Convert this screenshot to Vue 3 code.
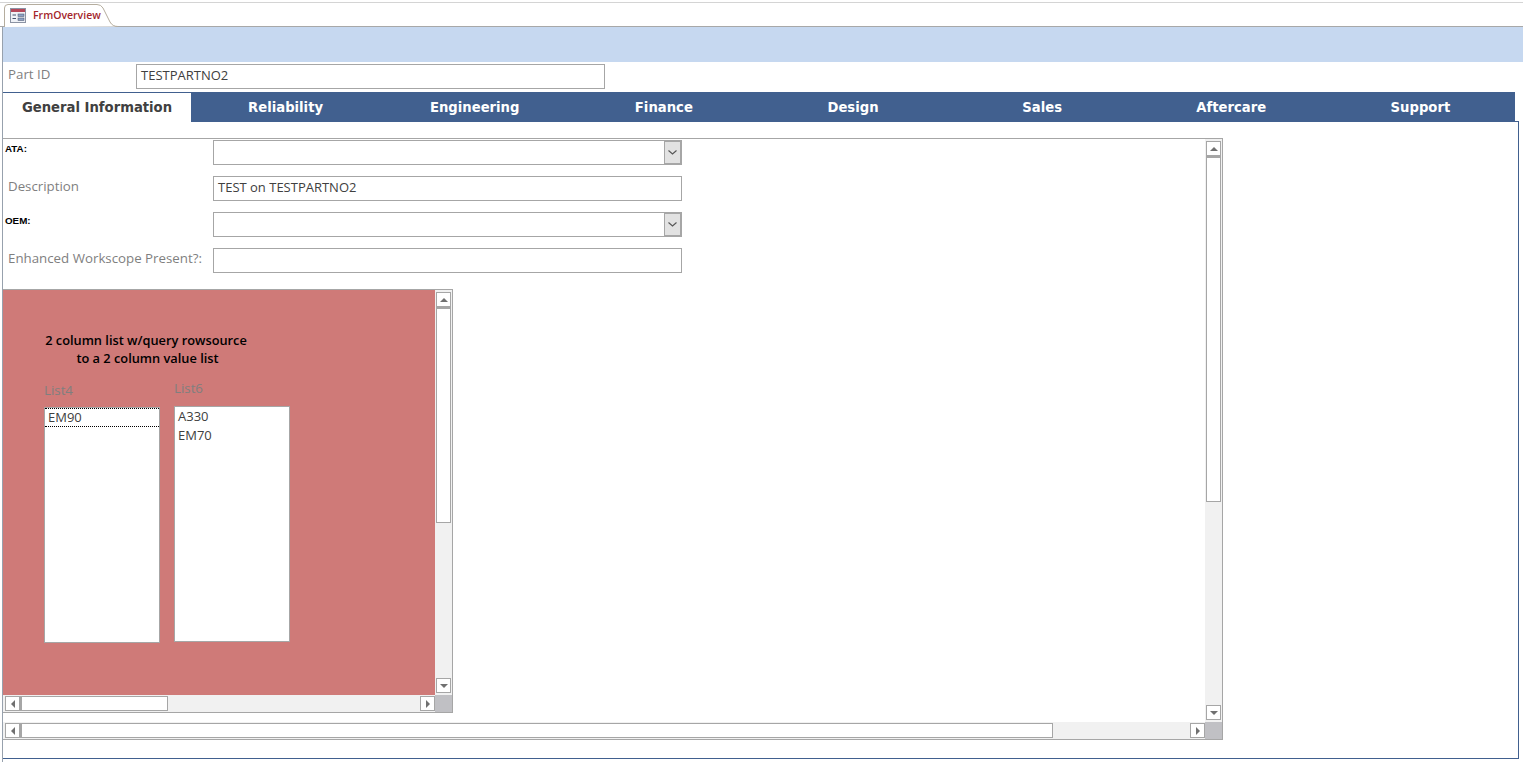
<script setup>
const tabs = ['Reliability', 'Engineering', 'Finance', 'Design', 'Sales', 'Aftercare', 'Support']
</script>

<template>
  <div class="page">
    <header class="doc-strip">
      <div class="doc-tab">
        <svg class="doc-tab-shape" width="116" height="24" viewBox="0 0 116 24">
          <path d="M1.500 24V5Q1.500 1.500 5 1.500H94Q98 1.500 100 5L107 19Q109.500 23.500 115 23.500" fill="#fff" stroke="#b5ad9e" />
        </svg>
        <svg class="form-icon" width="16" height="15" viewBox="0 0 16 15">
          <rect x="0.500" y="0.500" width="15" height="14" fill="#eef1f6" stroke="#8b93a3" />
          <rect x="1" y="1" width="14" height="3" fill="#b5485a" />
          <path d="M2.500 7H6M2.500 10.500H6" stroke="#44506a" />
          <rect x="8" y="6" width="6" height="2.500" fill="#8ea2c4" stroke="#44506a" stroke-width="0.500" />
          <rect x="8" y="10" width="6" height="2.500" fill="#8ea2c4" stroke="#44506a" stroke-width="0.500" />
        </svg>
        <span class="doc-title">FrmOverview</span>
      </div>
    </header>

    <main class="form">
      <div class="band"></div>

      <div class="part-row">
        <label class="field-label part-label">Part ID</label>
        <div class="box part-box">TESTPARTNO2</div>
      </div>

      <nav class="tabs">
        <div class="tab active">General Information</div>
        <div v-for="tab in tabs" :key="tab" class="tab">{{ tab }}</div>
      </nav>

      <section class="tab-page">
        <div class="scroller outer">
          <div class="pane outer-pane">
            <div class="row">
              <span class="mini-label">ATA:</span>
              <div class="box combo">
                <span class="combo-btn">
                  <svg width="9" height="5" viewBox="0 0 9 5"><path d="M0.500 0.500L4.500 4L8.500 0.500" fill="none" stroke="#555" stroke-width="1.100" /></svg>
                </span>
              </div>
            </div>
            <div class="row">
              <label class="field-label">Description</label>
              <div class="box">TEST on TESTPARTNO2</div>
            </div>
            <div class="row">
              <span class="mini-label">OEM:</span>
              <div class="box combo">
                <span class="combo-btn">
                  <svg width="9" height="5" viewBox="0 0 9 5"><path d="M0.500 0.500L4.500 4L8.500 0.500" fill="none" stroke="#555" stroke-width="1.100" /></svg>
                </span>
              </div>
            </div>
            <div class="row">
              <label class="field-label">Enhanced Workscope Present?:</label>
              <div class="box"></div>
            </div>

            <div class="scroller inner">
              <div class="pane pink">
                <h2 class="pink-title">2 column list w/query rowsource<span class="title-second">to a 2 column value list</span></h2>
                <div class="lists">
                  <div class="list-col first">
                    <span class="list-label">List4</span>
                    <div class="listbox">
                      <div class="list-item focused">EM90</div>
                    </div>
                  </div>
                  <div class="list-col">
                    <span class="list-label">List6</span>
                    <div class="listbox">
                      <div class="list-item">A330</div>
                      <div class="list-item">EM70</div>
                    </div>
                  </div>
                </div>
              </div>
              <div class="vbar">
                <span class="sb-btn"><i class="arrow up"></i></span>
                <span class="v-thumb inner-v"></span>
                <span class="v-fill"></span>
                <span class="sb-btn"><i class="arrow down"></i></span>
              </div>
              <div class="hbar">
                <span class="sb-btn"><i class="arrow left"></i></span>
                <span class="h-thumb inner-h"></span>
                <span class="h-fill"></span>
                <span class="sb-btn"><i class="arrow right"></i></span>
              </div>
              <div class="corner"></div>
            </div>
          </div>
          <div class="vbar">
            <span class="sb-btn"><i class="arrow up"></i></span>
            <span class="v-thumb outer-v"></span>
            <span class="v-fill"></span>
            <span class="sb-btn"><i class="arrow down"></i></span>
          </div>
          <div class="hbar">
            <span class="sb-btn"><i class="arrow left"></i></span>
            <span class="h-thumb outer-h"></span>
            <span class="h-fill"></span>
            <span class="sb-btn"><i class="arrow right"></i></span>
          </div>
          <div class="corner"></div>
        </div>
      </section>
    </main>
  </div>
</template>

<style>
html, body { margin: 0; background: #fff; overflow: hidden; }
</style>

<style scoped>
* { box-sizing: border-box; }

.page {
  width: 1523px;
  height: 762px;
  overflow: hidden;
  background: #fff;
  padding-top: 2px;
  font-family: "Open Sans", "Noto Sans", sans-serif;
  font-size: 13px;
  color: #404040;
}

.doc-strip {
  height: 25px;
  border-top: 1px solid #d4d4d4;
  border-bottom: 1px solid #a8a8a8;
}
.doc-tab {
  display: flex;
  align-items: center;
  height: 24px;
  width: 116px;
  padding-left: 7px;
  margin-left: 3px;
  position: relative;
}
.doc-tab-shape { position: absolute; left: 0; top: 0; }
.form-icon { position: relative; flex: none; margin-top: 1px; }
.doc-title {
  position: relative;
  margin-left: 7px;
  font-size: 10.5px;
  font-weight: 600;
  color: #a4262c;
  white-space: nowrap;
}

.form {
  height: 735px;
  margin-left: 2px;
  border-left: 1px solid #97a1ad;
}
.band { height: 35px; background: #c6d8f0; }

.part-row {
  display: flex;
  align-items: flex-start;
  height: 31px;
  width: 1512px;
  padding: 2px 0 0 5px;
  border-bottom: 1px solid #41608f;
}
.field-label {
  color: #7f7f7f;
  font-size: 13.3px;
  line-height: 20px;
  white-space: nowrap;
}
.part-label { width: 128px; flex: none; }
.box {
  width: 469px;
  height: 25px;
  border: 1px solid #a6a6a6;
  background: #fff;
  padding-left: 4px;
  line-height: 20px;
  font-size: 13px;
  color: #404040;
  white-space: nowrap;
}

.tabs {
  display: grid;
  grid-template-columns: 188px repeat(7, 1fr);
  height: 29px;
  width: 1512px;
  position: relative;
  z-index: 1;
}
.tab {
  height: 29px;
  background: #41608f;
  color: #fff;
  font-family: "DejaVu Sans", Verdana, sans-serif;
  font-size: 13.2px;
  font-weight: 700;
  line-height: 30px;
  text-align: center;
}
.tab.active { background: #fff; color: #404040; }

.tab-page {
  width: 1516px;
  height: 638px;
  margin-top: -1px;
  padding-top: 16px;
  border-top: 1px solid #41608f;
  border-right: 1px solid #41608f;
  border-bottom: 1px solid #41608f;
}

.scroller {
  display: grid;
  grid-template-columns: 1fr 17px;
  grid-template-rows: 1fr 17px;
  border: 1px solid #a6a6a6;
  border-left: 0;
  background: #fff;
}
.outer { width: 1220px; height: 602px; }
.inner { width: 450px; height: 424px; margin-top: 16px; }
.pane { min-width: 0; min-height: 0; overflow: hidden; }
.outer-pane { padding-top: 1px; }

.row {
  display: grid;
  grid-template-columns: 210px 469px;
  height: 25px;
  margin-bottom: 11px;
}
.row .field-label { padding-left: 5px; }
.row:last-of-type { margin-bottom: 0; }
.mini-label {
  padding: 3px 0 0 2px;
  font-family: "Liberation Sans", Arial, sans-serif;
  font-size: 9.8px;
  font-weight: 700;
  line-height: 11px;
  color: #000;
}
.combo { display: flex; justify-content: flex-end; }
.combo-btn {
  display: flex;
  align-items: center;
  justify-content: center;
  width: 17px;
  height: 23px;
  border: 1px solid #a6a6a6;
  background: #e2e2e2;
}

.pink {
  background: #cf7a78;
  padding-top: 41px;
}
.pink-title {
  width: 286px;
  margin: 0;
  font-size: 12.8px;
  font-weight: 600;
  line-height: 18px;
  text-align: center;
  color: #000;
}
.title-second { display: block; padding-left: 3px; }
.lists { display: flex; padding: 13px 0 0 41px; }
.list-col { display: flex; flex-direction: column; width: 116px; }
.list-col + .list-col { margin-left: 14px; }
.list-label { color: #7f7f7f; font-size: 13.3px; line-height: 17px; margin-bottom: 9px; }
.list-col.first { padding-top: 2px; }
.list-col.first .list-label { margin-bottom: 8px; }
.listbox {
  width: 116px;
  height: 236px;
  border: 1px solid #a6a6a6;
  background: #fff;
}
.list-item { height: 19px; padding-left: 3px; line-height: 18px; font-size: 13px; color: #404040; }
.list-item.focused { line-height: 17px; border-top: 1px dotted #000; border-bottom: 1px dotted #000; }

.vbar, .hbar { display: flex; background: #f1f1f1; }
.vbar { flex-direction: column; padding: 2px 0 2px 1px; }
.hbar { padding: 1px 0 0 2px; }
.sb-btn {
  display: flex;
  align-items: center;
  justify-content: center;
  flex: none;
  width: 15px;
  height: 15px;
  border: 1px solid #a6a6a6;
  background: #fff;
}
.v-thumb { display: block; width: 15px; flex: none; background: #fff; border: 1px solid #a6a6a6; border-top-width: 2px; }
.h-thumb { display: block; height: 15px; flex: none; background: #fff; border: 1px solid #a6a6a6; border-left-width: 2px; }
.v-fill, .h-fill { flex: 1; }
.outer-v { height: 346px; }
.inner-v { height: 216px; }
.outer-h { width: 1033px; }
.inner-h { width: 148px; }
.corner { background: #c0c0c4; }

.arrow { display: block; width: 0; height: 0; border: 4px solid transparent; }
.arrow.up { border-top: 0; border-bottom-color: #707070; }
.arrow.down { border-bottom: 0; border-top-color: #707070; }
.arrow.left { border-left: 0; border-right-color: #707070; }
.arrow.right { border-right: 0; border-left-color: #707070; }
</style>
